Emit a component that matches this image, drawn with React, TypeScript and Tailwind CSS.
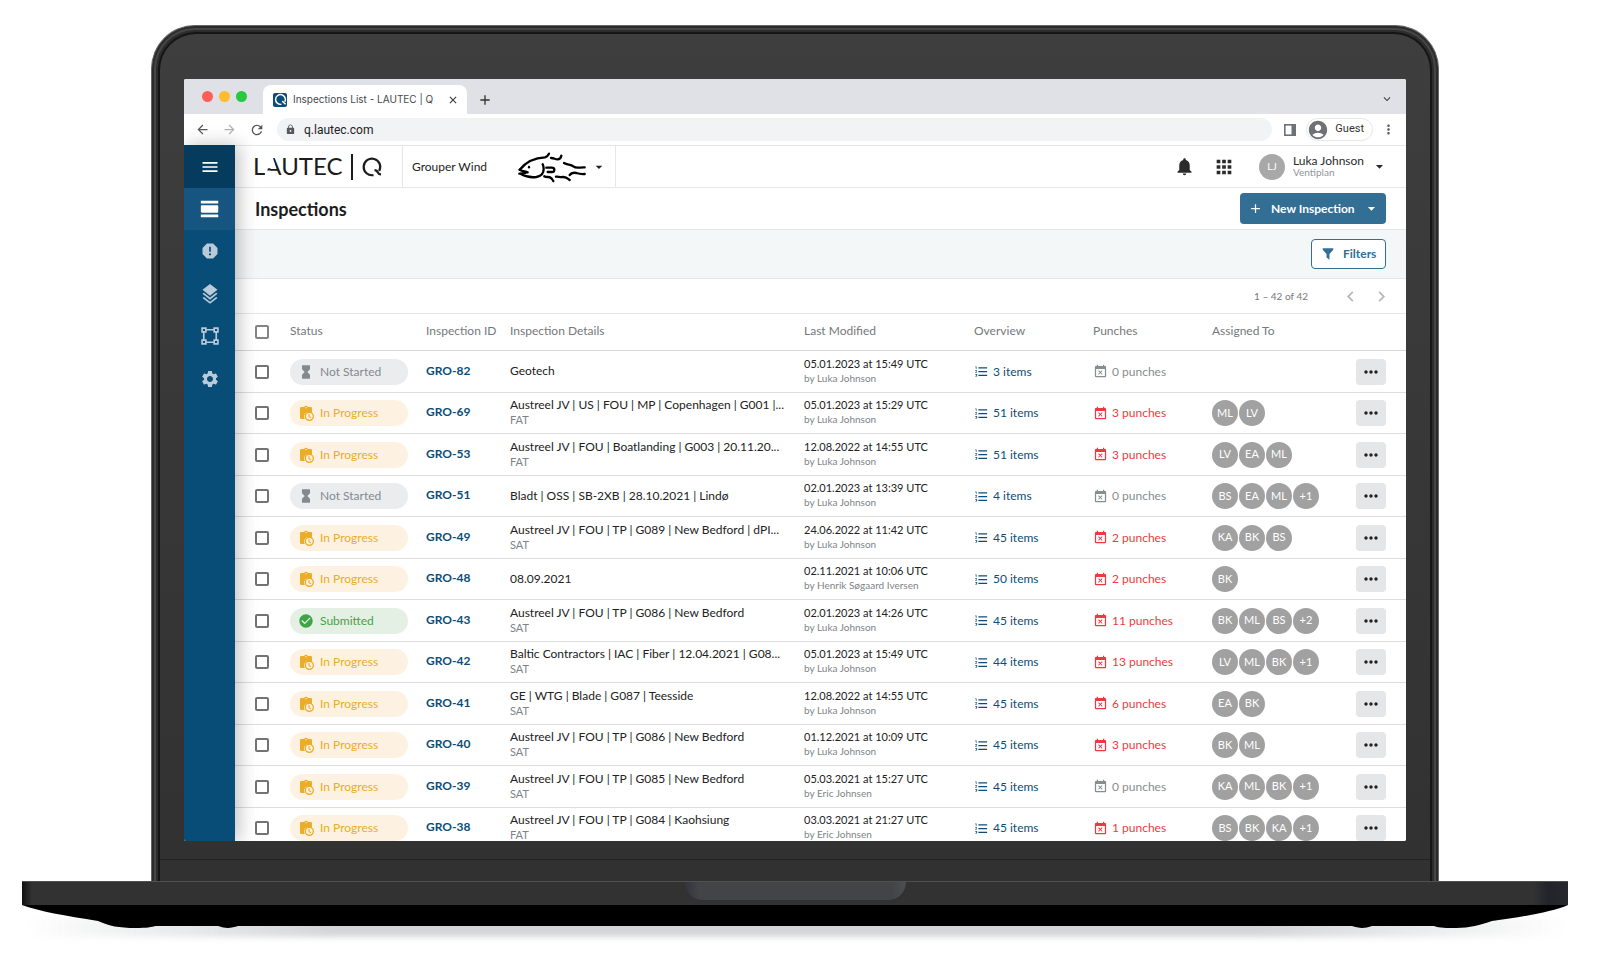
import React from "react";
import {
  MdAccountCircle,
  MdAdd,
  MdApps,
  MdArrowBack,
  MdArrowDropDown,
  MdArrowForward,
  MdCheckCircle,
  MdChevronLeft,
  MdChevronRight,
  MdClose,
  MdEventBusy,
  MdFormatListNumbered,
  MdKeyboardArrowDown,
  MdLock,
  MdMenu,
  MdMoreHoriz,
  MdMoreVert,
  MdNotifications,
  MdRefresh,
  MdReport,
  MdSettings,
  MdViewDay,
} from "react-icons/md";

type Status = "Not Started" | "In Progress" | "Submitted";

type Inspection = {
  id: string;
  status: Status;
  title: string;
  kind?: string;
  modified: string;
  by: string;
  items: number;
  punches: number;
  people: string[];
};

const inspections: Inspection[] = [
  { id: "GRO-82", status: "Not Started", title: "Geotech", modified: "05.01.2023 at 15:49 UTC", by: "Luka Johnson", items: 3, punches: 0, people: [] },
  { id: "GRO-69", status: "In Progress", title: "Austreel JV | US | FOU | MP | Copenhagen | G001 |...", kind: "FAT", modified: "05.01.2023 at 15:29 UTC", by: "Luka Johnson", items: 51, punches: 3, people: ["ML", "LV"] },
  { id: "GRO-53", status: "In Progress", title: "Austreel JV | FOU | Boatlanding | G003 | 20.11.20...", kind: "FAT", modified: "12.08.2022 at 14:55 UTC", by: "Luka Johnson", items: 51, punches: 3, people: ["LV", "EA", "ML"] },
  { id: "GRO-51", status: "Not Started", title: "Bladt | OSS | SB-2XB | 28.10.2021 | Lindø", modified: "02.01.2023 at 13:39 UTC", by: "Luka Johnson", items: 4, punches: 0, people: ["BS", "EA", "ML", "+1"] },
  { id: "GRO-49", status: "In Progress", title: "Austreel JV | FOU | TP | G089 | New Bedford | dPI...", kind: "SAT", modified: "24.06.2022 at 11:42 UTC", by: "Luka Johnson", items: 45, punches: 2, people: ["KA", "BK", "BS"] },
  { id: "GRO-48", status: "In Progress", title: "08.09.2021", modified: "02.11.2021 at 10:06 UTC", by: "Henrik Søgaard Iversen", items: 50, punches: 2, people: ["BK"] },
  { id: "GRO-43", status: "Submitted", title: "Austreel JV | FOU | TP | G086 | New Bedford", kind: "SAT", modified: "02.01.2023 at 14:26 UTC", by: "Luka Johnson", items: 45, punches: 11, people: ["BK", "ML", "BS", "+2"] },
  { id: "GRO-42", status: "In Progress", title: "Baltic Contractors | IAC | Fiber | 12.04.2021 | G08...", kind: "SAT", modified: "05.01.2023 at 15:49 UTC", by: "Luka Johnson", items: 44, punches: 13, people: ["LV", "ML", "BK", "+1"] },
  { id: "GRO-41", status: "In Progress", title: "GE | WTG | Blade | G087 | Teesside", kind: "SAT", modified: "12.08.2022 at 14:55 UTC", by: "Luka Johnson", items: 45, punches: 6, people: ["EA", "BK"] },
  { id: "GRO-40", status: "In Progress", title: "Austreel JV | FOU | TP | G086 | New Bedford", kind: "SAT", modified: "01.12.2021 at 10:09 UTC", by: "Luka Johnson", items: 45, punches: 3, people: ["BK", "ML"] },
  { id: "GRO-39", status: "In Progress", title: "Austreel JV | FOU | TP | G085 | New Bedford", kind: "SAT", modified: "05.03.2021 at 15:27 UTC", by: "Eric Johnsen", items: 45, punches: 0, people: ["KA", "ML", "BK", "+1"] },
  { id: "GRO-38", status: "In Progress", title: "Austreel JV | FOU | TP | G084 | Kaohsiung", kind: "FAT", modified: "03.03.2021 at 21:27 UTC", by: "Eric Johnsen", items: 45, punches: 1, people: ["BS", "BK", "KA", "+1"] },
];

/* ---------- icons ---------- */

const LayersIcon = () => (
  <svg viewBox="0 0 24 24" width="20" height="20" fill="currentColor">
    <path d="M12 0 21 7l-9 7-9-7z" />
    <path d="M12 16.200 4.600 10.500 3 11.800l9 7 9-7-1.600-1.300z" />
    <path d="M12 21.200 4.600 15.500 3 16.800l9 7 9-7-1.600-1.300z" />
  </svg>
);

const VectorSquareIcon = () => (
  <svg viewBox="0 0 24 24" width="20" height="20" fill="none" stroke="currentColor" strokeWidth="2">
    <path d="M7 4.500h10M7 19.500h10M4.500 7v10M19.500 7v10" />
    <path d="M2.500 2.500H7V7H2.500zM17 2.500h4.500V7H17zM2.500 17H7v4.500H2.500zM17 17h4.500v4.500H17z" />
  </svg>
);

const HourglassIcon = () => (
  <svg viewBox="0 0 24 24" width="16" height="16" fill="currentColor">
    <path d="M6 2h12v6l-4 4 4 4v6H6v-6l4-4-4-4z" />
  </svg>
);

const ClipboardClockIcon = () => (
  <svg viewBox="0 0 24 24" width="16" height="16">
    <path
      fill="currentColor"
      d="M19 3h-4.200a3 3 0 0 0-5.600 0H5a2 2 0 0 0-2 2v14a2 2 0 0 0 2 2h5.200a7 7 0 0 1 10.800-8.600V5a2 2 0 0 0-2-2zm-7 0a1 1 0 1 1 0 2 1 1 0 0 1 0-2z"
    />
    <circle cx="17" cy="17" r="6" fill="none" stroke="currentColor" strokeWidth="2" />
    <path d="M16.500 13.500v4l3 1.700" fill="none" stroke="currentColor" strokeWidth="1.600" />
  </svg>
);

const FunnelIcon = () => (
  <svg viewBox="0 0 24 24" width="14" height="14" fill="currentColor">
    <path d="M3 2h18v2.500l-6.500 7.500V22l-5-4v-6L3 4.500z" />
  </svg>
);

const SidePanelIcon = () => (
  <svg viewBox="0 0 12 12" width="12" height="12" className="text-[#6e7277]">
    <rect x="0.800" y="0.800" width="10.400" height="10.400" fill="none" stroke="currentColor" strokeWidth="1.600" />
    <rect x="7.500" y="0" width="4.500" height="12" fill="currentColor" />
  </svg>
);

const RingMark = ({ size, stroke }: { size: number; stroke: number }) => (
  <svg viewBox="0 0 22 22" width={size} height={size} fill="none" stroke="currentColor" strokeWidth={stroke}>
    <path d="M12.500 19.100A8.300 8.300 0 1 1 18.200 15" />
    <path d="M13.500 14.200c1.800 0 2.800.8 3.400 2.300.4 1.200 1.300 1.800 3.100 1.800" />
  </svg>
);

const Logo = () => (
  <div className="flex items-center text-[#1c1c1c]">
    <svg width="94" height="32" viewBox="0 0 94 32" role="img" aria-label="LAUTEC">
      <text x="0" y="24" fontSize="24" fontFamily="Lato, sans-serif" fill="currentColor">
        LAUTEC
      </text>
      {/* cuts the left leg of the A, keeping its bar */}
      <path d="M12 4h7.200l3.800 13.200H12zM12 19.600h5.500L15 25h-3z" fill="#fff" />
    </svg>
    <span className="ml-1 h-[26px] w-0.5 bg-[#1c1c1c]" />
    <span className="ml-2">
      <RingMark size={22} stroke={2.2} />
    </span>
  </div>
);

const FishLogo = () => (
  <svg viewBox="830 30 210 96" width="70" height="32" fill="none" stroke="#000" strokeWidth="7" strokeLinecap="round" strokeLinejoin="round">
    <path d="M838 86C856 64 884 50 914 49c6-2 9-5 12-11" />
    <path d="M932 51c10 0 12 4 19 4s11-4 12-11" />
    <path d="M838 86c8 5 16 5 24 8M837 98c8 0 14-1 22-4M842 99c14 8 30 11 46 9 18-3 22-14 22-24 0-6-1-10-3-14" />
    <path d="M866 78v1" />
    <path d="M918 80h16c5 0 8 2 8 6s-3 7-8 7h-12" />
    <path d="M912 106c8 4 14 0 20 5 3 2 4 5 7 9" />
    <path d="M947 107c8 0 12 2 20 1 10-1 15 4 21 9" />
    <path d="M971 66c10 6 20 4 28 10 9 8 20 2 34 3" />
    <path d="M988 102c4-6 11-8 20-6 9 3 15 4 25 3" />
  </svg>
);

/* ---------- browser chrome ---------- */

const TabStrip = () => (
  <div className="flex h-[35px] items-end bg-[#dfe1e6] pr-3 pl-[18px]">
    <div className="mb-3 flex gap-1.5">
      <span className="size-[11px] rounded-full bg-[#ff5f57]" />
      <span className="size-[11px] rounded-full bg-[#febc2e]" />
      <span className="size-[11px] rounded-full bg-[#28c840]" />
    </div>
    <div className="ml-4 flex h-[29px] w-[204px] items-center rounded-t-lg bg-white pr-2 pl-2.5">
      <span className="flex size-3.5 shrink-0 items-center justify-center rounded-xs bg-[#0b4d78] text-white">
        <RingMark size={13} stroke={2.5} />
      </span>
      <span className="ml-1.5 flex-1 whitespace-nowrap font-[Inter,sans-serif] text-[10px] text-[#45494d]">
        Inspections List - LAUTEC | Q
      </span>
      <button aria-label="Close tab" className="text-[#333]">
        <MdClose size={12} />
      </button>
    </div>
    <button aria-label="New tab" className="mb-1.5 ml-2.5 text-[#333]">
      <MdAdd size={16} />
    </button>
    <button aria-label="Search tabs" className="mb-2 ml-auto text-[#444]">
      <MdKeyboardArrowDown size={14} />
    </button>
  </div>
);

const Toolbar = () => (
  <div className="flex h-[31px] items-center bg-white pr-2.5 pl-[11px] text-[#55585c]">
    <button aria-label="Back">
      <MdArrowBack size={15} />
    </button>
    <button aria-label="Forward" className="ml-3 text-[#b0b2b5]">
      <MdArrowForward size={15} />
    </button>
    <button aria-label="Reload" className="ml-3">
      <MdRefresh size={16} />
    </button>
    <label className="ml-3 flex h-[23px] flex-1 items-center rounded-full bg-[#f1f3f4] px-2">
      <MdLock size={11} />
      <input
        aria-label="Address"
        readOnly
        value="q.lautec.com"
        className="ml-2 flex-1 bg-transparent font-[Roboto,sans-serif] text-xs text-[#1f2124] outline-none"
      />
    </label>
    <button aria-label="Side panel" className="ml-3">
      <SidePanelIcon />
    </button>
    <button className="ml-2.5 flex h-[23px] items-center rounded-full border border-gray-200 pr-2 font-[Roboto,sans-serif] text-[11px] text-[#333]">
      <MdAccountCircle size={22} className="mr-1.5 text-[#6e7277]" />
      Guest
    </button>
    <button aria-label="Menu" className="ml-2">
      <MdMoreVert size={15} />
    </button>
  </div>
);

/* ---------- app ---------- */

const Sidebar = () => {
  const items = [
    { key: "inspections", icon: <MdViewDay size={22} /> },
    { key: "punches", icon: <MdReport size={20} /> },
    { key: "layers", icon: <LayersIcon /> },
    { key: "areas", icon: <VectorSquareIcon /> },
    { key: "settings", icon: <MdSettings size={20} /> },
  ];

  return (
    <aside className="relative z-10 flex w-[51px] shrink-0 flex-col bg-[#074d77] shadow-[4px_0_18px_rgba(0,0,0,0.25)]">
      <button aria-label="menu" className="flex h-[43px] items-center justify-center bg-[#053c5e] text-white">
        <MdMenu size={20} />
      </button>
      {items.map((it) => (
        <button
          key={it.key}
          aria-label={it.key}
          className={`flex h-[42px] items-center justify-center ${
            it.key === "inspections" ? "bg-[#16557f] text-white" : "text-[#b9cad9] even:h-[43px]"
          }`}
        >
          {it.icon}
        </button>
      ))}
    </aside>
  );
};

const Header = () => (
  <header className="flex h-[43px] border-y border-gray-200 bg-white">
    <div className="flex w-[168px] items-center border-r border-gray-200 pl-[18px]">
      <Logo />
    </div>
    <button className="flex w-[213px] items-center border-r border-gray-200 pl-[9px] text-xs text-[#222]">
      Grouper Wind
      <span className="ml-[30px]">
        <FishLogo />
      </span>
      <MdArrowDropDown size={16} className="ml-1" />
    </button>
    <div className="ml-auto flex items-center pr-[18px] text-[#2b2b2b]">
      <button aria-label="Notifications">
        <MdNotifications size={21} />
      </button>
      <button aria-label="Apps" className="ml-[18px]">
        <MdApps size={22} />
      </button>
      <button className="ml-6 flex items-center">
        <span className="flex size-[26px] items-center justify-center rounded-full bg-[#a8a8a8] text-[10px] text-white">
          LJ
        </span>
        <span className="ml-2 flex w-[78px] flex-col text-left">
          <span className="whitespace-nowrap text-xs leading-3">Luka Johnson</span>
          <span className="text-[10px] leading-[11px] text-[#909699]">Ventiplan</span>
        </span>
        <MdArrowDropDown size={17} />
      </button>
    </div>
  </header>
);

const StatusPill = ({ status }: { status: Status }) => {
  const looks = {
    "Not Started": { box: "bg-[#ebecee] text-[#828a8e]", icon: <HourglassIcon /> },
    "In Progress": { box: "bg-[#fdf2e1] text-[#ebad28]", icon: <ClipboardClockIcon /> },
    Submitted: { box: "bg-[#e5f0e4] text-[#3fa447]", icon: <MdCheckCircle size={16} /> },
  };
  return (
    <span className={`flex h-[26px] w-[118px] items-center gap-1.5 rounded-full pl-2 text-xs ${looks[status].box}`}>
      {looks[status].icon}
      {status}
    </span>
  );
};

const Row = ({ row }: { row: Inspection }) => (
  <tr className="h-[41px] odd:h-[42px] [&>td]:border-b [&>td]:border-[#dcdddf]">
    <td className="pl-5">
      <input
        type="checkbox"
        aria-label={`Select ${row.id}`}
        className="block size-3.5 appearance-none rounded-xs border-2 border-[#737373]"
      />
    </td>
    <td>
      <StatusPill status={row.status} />
    </td>
    <td className="pb-0.5">
      <a href={`#${row.id}`} className="font-bold text-[#0b4d78]">
        {row.id}
      </a>
    </td>
    <td className="whitespace-nowrap pb-0.5 leading-[15px] text-[#222]">
      {row.title}
      {row.kind && <div className="text-[11px] leading-[15px] text-[#7d8588]">{row.kind}</div>}
    </td>
    <td className="whitespace-nowrap pb-0.5 text-[11px] leading-[15px] text-[#222]">
      {row.modified}
      <div className="text-[10px] leading-[15px] text-[#7d8588]">by {row.by}</div>
    </td>
    <td>
      <a href={`#${row.id}-items`} className="flex items-center gap-1 text-[#0b4d78]">
        <MdFormatListNumbered size={15} />
        {row.items} items
      </a>
    </td>
    <td>
      <a
        href={`#${row.id}-punches`}
        className={`flex items-center gap-1 ${row.punches ? "text-[#ec3b40]" : "text-[#868e91]"}`}
      >
        <MdEventBusy size={15} />
        {row.punches} punches
      </a>
    </td>
    <td>
      <div className="flex gap-px">
        {row.people.map((p) => (
          <span
            key={p}
            className="flex size-[26px] items-center justify-center rounded-full bg-[#a1a1a1] text-[11px] text-white"
          >
            {p}
          </span>
        ))}
      </div>
    </td>
    <td>
      <button
        aria-label={`Actions for ${row.id}`}
        className="flex h-[26px] w-[30px] items-center justify-center rounded-sm bg-[#e5e6e8] text-[#222]"
      >
        <MdMoreHoriz size={20} />
      </button>
    </td>
  </tr>
);

const InspectionTable = () => (
  <table className="w-full table-fixed border-separate border-spacing-0 text-xs">
    <colgroup>
      <col className="w-[55px]" />
      <col className="w-[136px]" />
      <col className="w-[84px]" />
      <col />
      <col className="w-[170px]" />
      <col className="w-[119px]" />
      <col className="w-[119px]" />
      <col className="w-[144px]" />
      <col className="w-[50px]" />
    </colgroup>
    <thead>
      <tr className="h-[37px] text-left text-[#75797c] [&>th]:border-b [&>th]:border-[#d6d7d9] [&>th]:font-normal [&>th]:whitespace-nowrap">
        <th className="pl-5">
          <input
            type="checkbox"
            aria-label="Select all"
            className="block size-3.5 appearance-none rounded-xs border-2 border-[#858585]"
          />
        </th>
        <th className="pb-0.5">Status</th>
        <th className="pb-0.5">Inspection ID</th>
        <th className="pb-0.5">Inspection Details</th>
        <th className="pb-0.5">Last Modified</th>
        <th className="pb-0.5">Overview</th>
        <th className="pb-0.5">Punches</th>
        <th className="pb-0.5">Assigned To</th>
        <th aria-label="Actions" />
      </tr>
    </thead>
    <tbody>
      {inspections.map((row) => (
        <Row key={row.id} row={row} />
      ))}
    </tbody>
  </table>
);

const Page = () => (
  <main className="min-w-0 flex-1 bg-white">
    <Header />
    <div className="flex h-[41px] items-center justify-between px-5">
      <h1 className="text-lg font-bold text-[#1d1d1d]">Inspections</h1>
      <button className="flex h-[31px] w-[146px] items-center rounded-sm bg-[#336e94] pl-2 text-xs font-bold text-white">
        <MdAdd size={15} />
        <span className="ml-2 flex-1 text-left whitespace-nowrap">New Inspection</span>
        <MdArrowDropDown size={17} className="mr-1.5" />
      </button>
    </div>
    <div className="flex h-[50px] items-center justify-end border-y border-[#e3e6e8] bg-[#f4f7f8] pr-5">
      <button className="flex h-[30px] w-[75px] items-center gap-2 rounded-sm border border-[#336e94] bg-white pl-[9px] text-xs font-bold text-[#336e94]">
        <FunnelIcon />
        Filters
      </button>
    </div>
    <div className="flex h-[35px] items-center justify-end border-b border-gray-200 pr-3.5 text-[#75797c]">
      <span className="text-[10px]">1 – 42 of 42</span>
      <button aria-label="Previous page" className="ml-8 text-[#b5b7b9]">
        <MdChevronLeft size={21} />
      </button>
      <button aria-label="Next page" className="ml-2.5 text-[#b5b7b9]">
        <MdChevronRight size={21} />
      </button>
    </div>
    <InspectionTable />
  </main>
);

/* ---------- laptop ---------- */

const LaptopBase = () => (
  <div>
    <div className="flex h-6 justify-center border-t border-[#505052] bg-[linear-gradient(90deg,#111_0,#323232_10px,#323232_calc(100%-34px),#22242b_calc(100%-20px),#26282d_100%)]">
      <div className="h-[18px] w-[221px] rounded-b-[18px] bg-[linear-gradient(90deg,#33353f,#434447_14px,#434447_calc(100%-14px),#4d4e51)]" />
    </div>
    <svg viewBox="0 0 1546 46" preserveAspectRatio="none" className="block h-[46px] w-full overflow-visible">
      <defs>
        <linearGradient id="fade" x1="0" x2="1" y1="0" y2="0">
          <stop offset="0" stopColor="#d3d5d7" stopOpacity="0" />
          <stop offset="0.2" stopColor="#d3d5d7" />
          <stop offset="0.8" stopColor="#d3d5d7" />
          <stop offset="1" stopColor="#d3d5d7" stopOpacity="0" />
        </linearGradient>
        <filter id="soft" x="-5%" y="-100%" width="110%" height="300%" colorInterpolationFilters="sRGB">
          <feGaussianBlur stdDeviation="3" />
        </filter>
      </defs>
      <rect x="0" y="12" width="1546" height="20" fill="url(#fade)" filter="url(#soft)" />
      <path
        fill="#000"
        d="M0 0C16 6 44 11 76 16c12 5 20 7 38 7 10 0 16-1 20-2h62c8 3 14 2 20 0h1114c6 2 12 3 20 0h62c6 2 12 2 22 2 14 0 24-3 36-7 30-4 60-9 76-16z"
      />
    </svg>
  </div>
);

export default function App() {
  return (
    <div className="min-h-screen bg-white pt-[25px] pr-8 pl-[22px] font-[Lato,sans-serif]">
      <div className="mx-[129px] overflow-hidden rounded-t-[44px] border border-b-0 border-[#666] bg-[#2c2c2c] px-0.5 pt-0.5">
        <div className="rounded-t-[41px] border-2 border-b-0 border-[#464646] bg-[#2c2c2c] px-0.5 pt-0.5">
          <div className="rounded-t-[38px] border-2 border-b-0 border-[#151515] bg-linear-to-b from-[#3e3e3e] to-[#313131] pt-[45px]">
            <div className="mx-6 flex aspect-[1222/762] flex-col overflow-hidden rounded-xs bg-white">
              <TabStrip />
              <Toolbar />
              <div className="flex min-h-0 flex-1">
                <Sidebar />
                <Page />
              </div>
            </div>
            <div className="mt-[18px] h-[22px] border-t border-[#222]" />
          </div>
        </div>
      </div>
      <LaptopBase />
    </div>
  );
}
